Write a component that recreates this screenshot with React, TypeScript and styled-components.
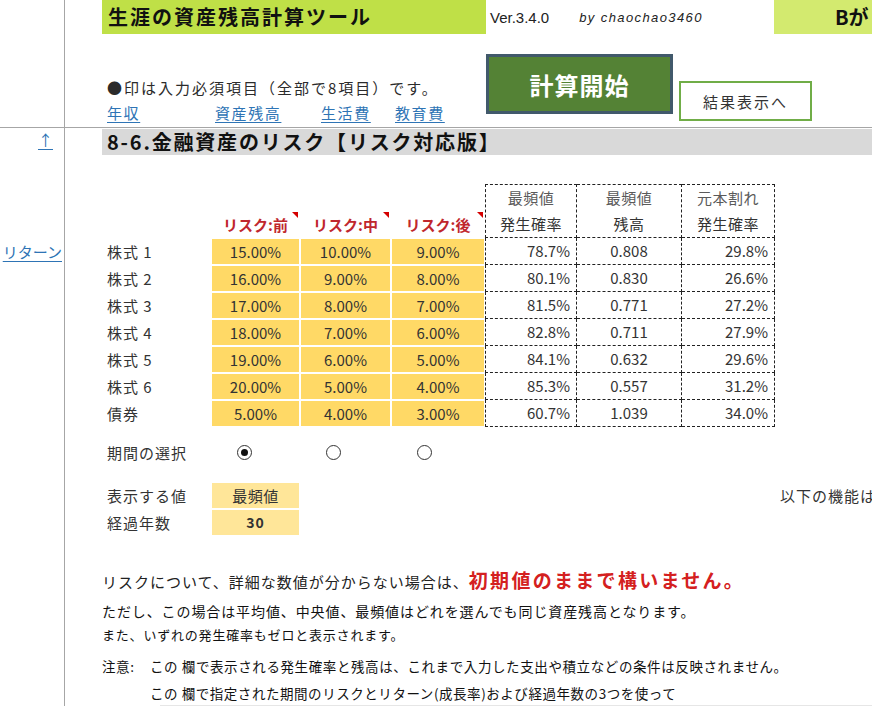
import React from "react";
import styled, { createGlobalStyle } from "styled-components";

// risk sheet: three risk periods per asset, with the stats the simulation gives back

const GlobalStyle = createGlobalStyle`
  html, body {
    margin: 0;
    padding: 0;
    background: #fff;
  }
  body {
    font-family: "Noto Sans CJK JP", "Noto Sans", sans-serif;
    color: #2b2b2b;
  }
`;

const COLS = "109px 89px 91px 94px 92px 105px 93px";

const Sheet = styled.div`
  width: 872px;
  height: 706px;
  overflow: hidden;
  display: flex;
  flex-direction: column;
`;

const HeaderBand = styled.div`
  display: flex;
  height: 128px;
  box-sizing: border-box;
  border-bottom: 1px solid #a6a6a6;
  flex: none;
`;

const BodyBand = styled.div`
  display: flex;
  flex: 1;
  min-height: 0;
`;

const Gutter = styled.div`
  width: 65px;
  flex: none;
  box-sizing: border-box;
  border-right: 1px solid #a6a6a6;
  display: flex;
  flex-direction: column;
  align-items: flex-end;
`;

const SideLink = styled.a<{ $top: number; $right: number }>`
  margin-top: ${(p) => p.$top}px;
  margin-right: ${(p) => p.$right}px;
  font-size: 15px;
  line-height: 20px;
  color: #2e74b5;
  text-decoration: underline;
  text-underline-offset: 3px;
  cursor: pointer;
`;

const Main = styled.div`
  flex: 1;
  min-width: 0;
  padding-left: 37px;
  display: flex;
  flex-direction: column;
`;

const TopBar = styled.div`
  display: flex;
  height: 34px;
`;

const AppTitle = styled.div`
  width: 384px;
  background: #bfe047;
  font-size: 20px;
  font-weight: 700;
  letter-spacing: 2px;
  line-height: 34px;
  padding-left: 6px;
  box-sizing: border-box;
  color: #111;
`;

const VersionBox = styled.div`
  width: 288px;
  display: flex;
  align-items: center;
  gap: 30px;
  padding-left: 4px;
  box-sizing: border-box;
`;

const Version = styled.span`
  font-family: "Liberation Sans", Arial, sans-serif;
  font-size: 15px;
  color: #222;
`;

const Author = styled.span`
  font-family: "Liberation Sans", Arial, sans-serif;
  font-size: 13px;
  font-style: italic;
  letter-spacing: 1.4px;
  color: #222;
`;

const SideTitle = styled.div`
  flex: 1;
  background: #d3ea6f;
  font-size: 20px;
  font-weight: 700;
  line-height: 34px;
  padding-left: 61px;
  white-space: nowrap;
  color: #111;
`;

const Lower = styled.div`
  display: flex;
  flex: 1;
`;

const NoteBlock = styled.div`
  width: 384px;
  display: flex;
  flex-direction: column;
  justify-content: flex-end;
  padding: 0 0 2px 5px;
  box-sizing: border-box;
`;

const Note = styled.div`
  font-size: 15px;
  letter-spacing: 2px;
  line-height: 26px;
  white-space: nowrap;
`;

const LinkRow = styled.div`
  display: grid;
  grid-template-columns: 108px 106px 74px auto;
  line-height: 24px;
`;

const SheetLink = styled.a`
  font-size: 15px;
  letter-spacing: 1.6px;
  color: #2e74b5;
  text-decoration: underline;
  text-underline-offset: 3px;
  cursor: pointer;
`;

const StartButton = styled.button`
  margin-top: 20px;
  width: 187px;
  height: 60px;
  background: #548235;
  border: 3px solid #41596b;
  color: #fff;
  font-family: inherit;
  font-size: 24px;
  font-weight: 700;
  letter-spacing: 1px;
  cursor: pointer;
`;

const ResultButton = styled.button`
  margin: 47px 0 0 6px;
  width: 133px;
  height: 40px;
  background: #fff;
  border: 2px solid #70ad47;
  color: #333;
  font-family: inherit;
  font-size: 15px;
  letter-spacing: 2px;
  cursor: pointer;
`;

const SectionTitle = styled.div`
  margin-top: 1px;
  height: 26px;
  background: #d9d9d9;
  padding-left: 5px;
  font-size: 20px;
  font-weight: 700;
  letter-spacing: 1.8px;
  line-height: 26px;
  white-space: nowrap;
  color: #111;
`;

const RiskGrid = styled.div`
  margin-top: 29px;
  display: grid;
  grid-template-columns: ${COLS};
  grid-auto-rows: 27px;
`;

const RowLabel = styled.div`
  padding-left: 5px;
  font-size: 15px;
  letter-spacing: 1px;
  line-height: 27px;
  color: #333;
  white-space: nowrap;
`;

const RiskHead = styled.div`
  position: relative;
  text-align: center;
  font-size: 15px;
  font-weight: 700;
  line-height: 27px;
  color: #c0272d;

  &::after {
    content: "";
    position: absolute;
    top: 1px;
    right: 2px;
    border-left: 6px solid transparent;
    border-top: 6px solid #d40000;
  }
`;

const RateCell = styled.div<{ $tone?: "pale" }>`
  background: ${(p) => (p.$tone === "pale" ? "#ffe699" : "#ffd966")};
  border: 1px solid #fff;
  text-align: center;
  font-size: 15px;
  line-height: 25px;
  color: #333;
`;

const StatHead = styled.div<{ $first?: boolean }>`
  grid-row: span 2;
  display: flex;
  flex-direction: column;
  align-items: center;
  border-top: 1px dashed #222;
  border-right: 1px dashed #222;
  border-bottom: 1px dashed #222;
  border-left: ${(p) => (p.$first ? "1px dashed #222" : "none")};
  font-size: 15px;
  letter-spacing: 0.5px;
  line-height: 26px;
  color: #333;

  & span:first-child {
    color: #5a5a5a;
  }
`;

const StatCell = styled.div<{ $first?: boolean; $align: "right" | "center" }>`
  border-right: 1px dashed #222;
  border-bottom: 1px dashed #222;
  border-left: ${(p) => (p.$first ? "1px dashed #222" : "none")};
  text-align: ${(p) => p.$align};
  padding: 0 6px;
  font-size: 15px;
  line-height: 26px;
  color: #333;
`;

const ChoiceGrid = styled.div<{ $gap: number }>`
  margin-top: ${(p) => p.$gap}px;
  display: grid;
  grid-template-columns: ${COLS} 1fr;
  grid-auto-rows: 27px;
`;

const RadioSlot = styled.div`
  display: flex;
  align-items: center;
  padding-left: 26px;
`;

const Radio = styled.span<{ $checked?: boolean }>`
  width: 13px;
  height: 13px;
  border: 1px solid #333;
  border-radius: 50%;
  display: flex;
  align-items: center;
  justify-content: center;

  &::after {
    content: "";
    width: 7px;
    height: 7px;
    border-radius: 50%;
    background: ${(p) => (p.$checked ? "#111" : "transparent")};
  }
`;

const ValueCell = styled(RateCell)<{ $bold?: boolean }>`
  font-weight: ${(p) => (p.$bold ? 700 : 400)};
  font-size: ${(p) => (p.$bold ? 14 : 15)}px;
  letter-spacing: ${(p) => (p.$bold ? 1 : 0.5)}px;
`;

const OffNote = styled.div`
  grid-column: 8;
  padding-left: 5px;
  font-size: 15px;
  letter-spacing: 1px;
  line-height: 27px;
  white-space: nowrap;
  color: #333;
`;

const Lead = styled.div`
  margin-top: 30px;
  font-size: 15px;
  letter-spacing: 1px;
  line-height: 28px;
  white-space: nowrap;
  color: #222;
`;

const Strong = styled.span`
  font-size: 19px;
  font-weight: 700;
  letter-spacing: 2.3px;
  color: #d42020;
`;

const Remark = styled.div<{ $size: number; $spacing: number; $top?: number; $indent?: number }>`
  margin-top: ${(p) => p.$top ?? 0}px;
  padding-left: ${(p) => p.$indent ?? 0}px;
  display: flex;
  font-size: ${(p) => p.$size}px;
  letter-spacing: ${(p) => p.$spacing}px;
  line-height: 24px;
  white-space: nowrap;
  color: #111;
`;

const RemarkLabel = styled.span`
  width: 48px;
  flex: none;
`;

const BottomEdge = styled.div`
  margin: auto 0 0 58px;
  height: 3px;
  background: #e6e6e6;
`;

type AssetRow = {
  name: string;
  risks: [string, string, string];
  modeProb: string;
  modeBalance: string;
  lossProb: string;
};

const rows: AssetRow[] = [
  { name: "株式 1", risks: ["15.00%", "10.00%", "9.00%"], modeProb: "78.7%", modeBalance: "0.808", lossProb: "29.8%" },
  { name: "株式 2", risks: ["16.00%", "9.00%", "8.00%"], modeProb: "80.1%", modeBalance: "0.830", lossProb: "26.6%" },
  { name: "株式 3", risks: ["17.00%", "8.00%", "7.00%"], modeProb: "81.5%", modeBalance: "0.771", lossProb: "27.2%" },
  { name: "株式 4", risks: ["18.00%", "7.00%", "6.00%"], modeProb: "82.8%", modeBalance: "0.711", lossProb: "27.9%" },
  { name: "株式 5", risks: ["19.00%", "6.00%", "5.00%"], modeProb: "84.1%", modeBalance: "0.632", lossProb: "29.6%" },
  { name: "株式 6", risks: ["20.00%", "5.00%", "4.00%"], modeProb: "85.3%", modeBalance: "0.557", lossProb: "31.2%" },
  { name: "債券", risks: ["5.00%", "4.00%", "3.00%"], modeProb: "60.7%", modeBalance: "1.039", lossProb: "34.0%" },
];

const periods = ["前", "中", "後"];

const App = (): JSX.Element => {
  const [period, setPeriod] = React.useState<number>(0);

  return (
    <Sheet>
      <GlobalStyle />
      <HeaderBand>
        <Gutter />
        <Main>
          <TopBar>
            <AppTitle>生涯の資産残高計算ツール</AppTitle>
            <VersionBox>
              <Version>Ver.3.4.0</Version>
              <Author>by chaochao3460</Author>
            </VersionBox>
            <SideTitle>Bが</SideTitle>
          </TopBar>
          <Lower>
            <NoteBlock>
              <Note>●印は入力必須項目（全部で8項目）です。</Note>
              <LinkRow>
                <SheetLink>年収</SheetLink>
                <SheetLink>資産残高</SheetLink>
                <SheetLink>生活費</SheetLink>
                <SheetLink>教育費</SheetLink>
              </LinkRow>
            </NoteBlock>
            <StartButton>計算開始</StartButton>
            <ResultButton>結果表示へ</ResultButton>
          </Lower>
        </Main>
      </HeaderBand>

      <BodyBand>
        <Gutter>
          <SideLink $top={2} $right={11}>↑</SideLink>
          <SideLink $top={92} $right={2}>リターン</SideLink>
        </Gutter>
        <Main>
          <SectionTitle>8-6.金融資産のリスク【リスク対応版】</SectionTitle>

          <RiskGrid>
            <div />
            <div />
            <div />
            <div />
            <StatHead $first>
              <span>最頻値</span>
              <span>発生確率</span>
            </StatHead>
            <StatHead>
              <span>最頻値</span>
              <span>残高</span>
            </StatHead>
            <StatHead>
              <span>元本割れ</span>
              <span>発生確率</span>
            </StatHead>
            <div />
            {periods.map((p) => (
              <RiskHead key={p}>リスク:{p}</RiskHead>
            ))}
            {rows.map((r) => (
              <React.Fragment key={r.name}>
                <RowLabel>{r.name}</RowLabel>
                {r.risks.map((v, i) => (
                  <RateCell key={i}>{v}</RateCell>
                ))}
                <StatCell $first $align="right">{r.modeProb}</StatCell>
                <StatCell $align="center">{r.modeBalance}</StatCell>
                <StatCell $align="right">{r.lossProb}</StatCell>
              </React.Fragment>
            ))}
          </RiskGrid>

          <ChoiceGrid $gap={12}>
            <RowLabel>期間の選択</RowLabel>
            {periods.map((p, i) => (
              <RadioSlot key={p} onClick={() => setPeriod(i)}>
                <Radio $checked={period === i} />
              </RadioSlot>
            ))}
          </ChoiceGrid>

          <ChoiceGrid $gap={16}>
            <RowLabel>表示する値</RowLabel>
            <ValueCell $tone="pale">最頻値</ValueCell>
            <OffNote>以下の機能は</OffNote>
            <RowLabel>経過年数</RowLabel>
            <ValueCell $tone="pale" $bold>30</ValueCell>
          </ChoiceGrid>

          <Lead>
            リスクについて、詳細な数値が分からない場合は、<Strong>初期値のままで構いません。</Strong>
          </Lead>
          <Remark $size={14} $spacing={0.9} $top={3}>
            ただし、この場合は平均値、中央値、最頻値はどれを選んでも同じ資産残高となります。
          </Remark>
          <Remark $size={13} $spacing={0.8}>また、いずれの発生確率もゼロと表示されます。</Remark>
          <Remark $size={13.5} $spacing={0.6} $top={7}>
            <RemarkLabel>注意:</RemarkLabel>
            この 欄で表示される発生確率と残高は、これまで入力した支出や積立などの条件は反映されません。
          </Remark>
          <Remark $size={13.5} $spacing={0.55} $top={3} $indent={48}>
            この 欄で指定された期間のリスクとリターン(成長率)および経過年数の3つを使って
          </Remark>
          <BottomEdge />
        </Main>
      </BodyBand>
    </Sheet>
  );
};

export default App;
